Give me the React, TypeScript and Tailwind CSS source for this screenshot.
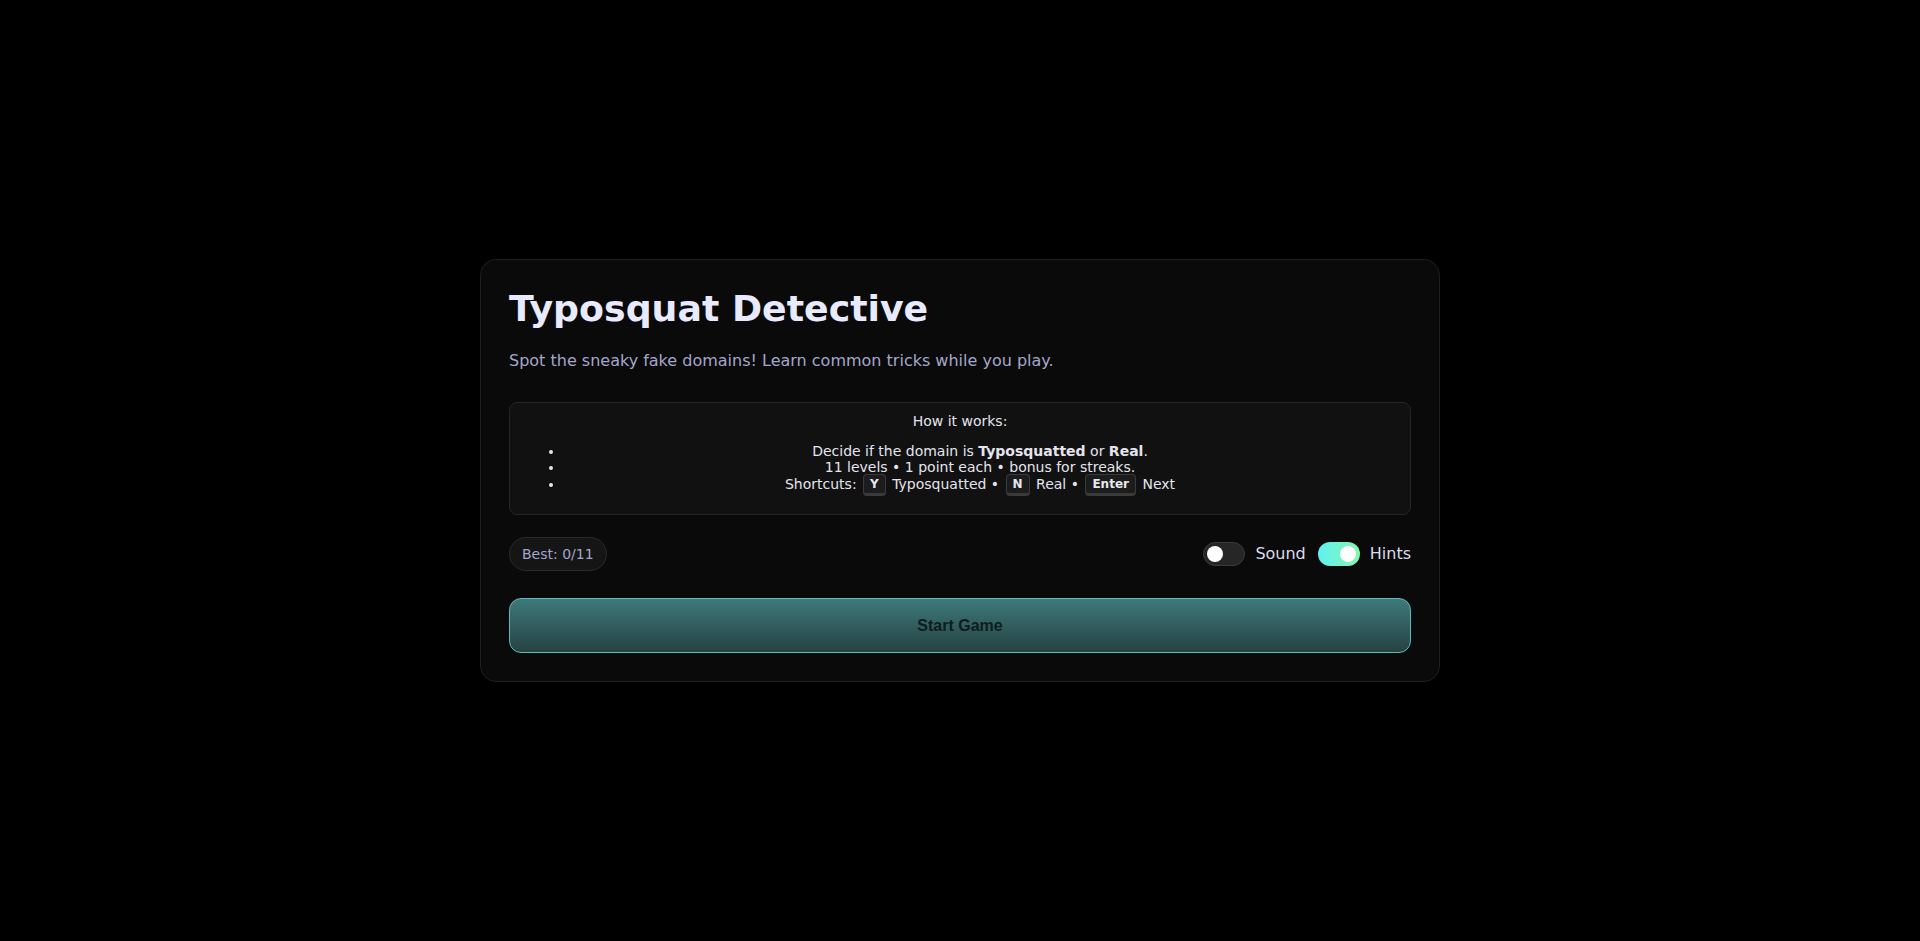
import React, { useState } from 'react';

const Kbd = ({ children }: { children: React.ReactNode }) => (
  <kbd className="mx-[2px] rounded-[4px] border border-[#3a3a3a] border-b-[3px] bg-[#1c1c1c] px-[6px] py-[2px] align-[1px] text-[12px] leading-[14px] font-bold text-[#e8e8f0] [font-family:'DejaVu_Sans',sans-serif]">
    {children}
  </kbd>
);

const Toggle = ({ on, onClick, label }: { on: boolean; onClick: () => void; label: string }) => (
  <label className="flex cursor-pointer items-center gap-[10px]" onClick={onClick}>
    <span
      className={
        on
          ? 'flex h-[24px] w-[42px] items-center justify-end rounded-full bg-gradient-to-r from-[#5ef2f2] to-[#86f5a8] px-[4px]'
          : 'flex h-[24px] w-[42px] items-center justify-start rounded-full border border-[#3a3a3a] bg-[#262626] px-[3px]'
      }
    >
      <span className="h-[16px] w-[16px] rounded-full bg-white" />
    </span>
    <span className="text-[16px] text-[#dcdcf0]">{label}</span>
  </label>
);

export default function App() {
  const [sound, setSound] = useState(false);
  const [hints, setHints] = useState(true);

  return (
    <div className="flex min-h-[941px] w-full items-center justify-center bg-black [font-family:'DejaVu_Sans',sans-serif]">
      <div className="w-[960px] rounded-[16px] border border-[#1f1f1f] bg-[#0a0a0a] px-[28px] pt-[27px] pb-[28px]">
        <h1 className="text-[36.3px] font-bold leading-[43px] text-[#e8eaff]">Typosquat Detective</h1>
        <p className="mt-[19px] text-[16px] leading-[24px] text-[#a3a7cc]">
          Spot the sneaky fake domains! Learn common tricks while you play.
        </p>

        <div className="mt-[29px] rounded-[8px] border border-[#262626] bg-[#111111] px-[14px] pt-[8px] pb-[22px] text-center text-[14px] text-[#e4e4ee]">
          <div className="leading-[20px]">How it works:</div>
          <ul className="mt-[12px] list-disc pl-[40px] leading-[16.5px]">
            <li>
              Decide if the domain is <b>Typosquatted</b> or <b>Real</b>.
            </li>
            <li>11 levels • 1 point each • bonus for streaks.</li>
            <li>
              Shortcuts: <Kbd>Y</Kbd> Typosquatted • <Kbd>N</Kbd> Real • <Kbd>Enter</Kbd> Next
            </li>
          </ul>
        </div>

        <div className="mt-[22px] flex items-center justify-between">
          <div className="flex h-[34px] items-center rounded-full border border-[#2a2a2a] bg-[#151515] px-[12px] text-[14px] text-[#a3a7cc]">
            Best: 0/11
          </div>
          <div className="flex items-center gap-[12px]">
            <Toggle on={sound} onClick={() => setSound(!sound)} label="Sound" />
            <Toggle on={hints} onClick={() => setHints(!hints)} label="Hints" />
          </div>
        </div>

        <button className="mt-[27px] flex h-[55px] w-full items-center justify-center rounded-[12px] border border-[#5cbaba] bg-gradient-to-b from-[#3e7a7a] to-[#264242] text-[16px] font-bold text-[#0e1c20] [font-family:'Liberation_Sans',Arial,sans-serif]">
          Start Game
        </button>
      </div>
    </div>
  );
}
